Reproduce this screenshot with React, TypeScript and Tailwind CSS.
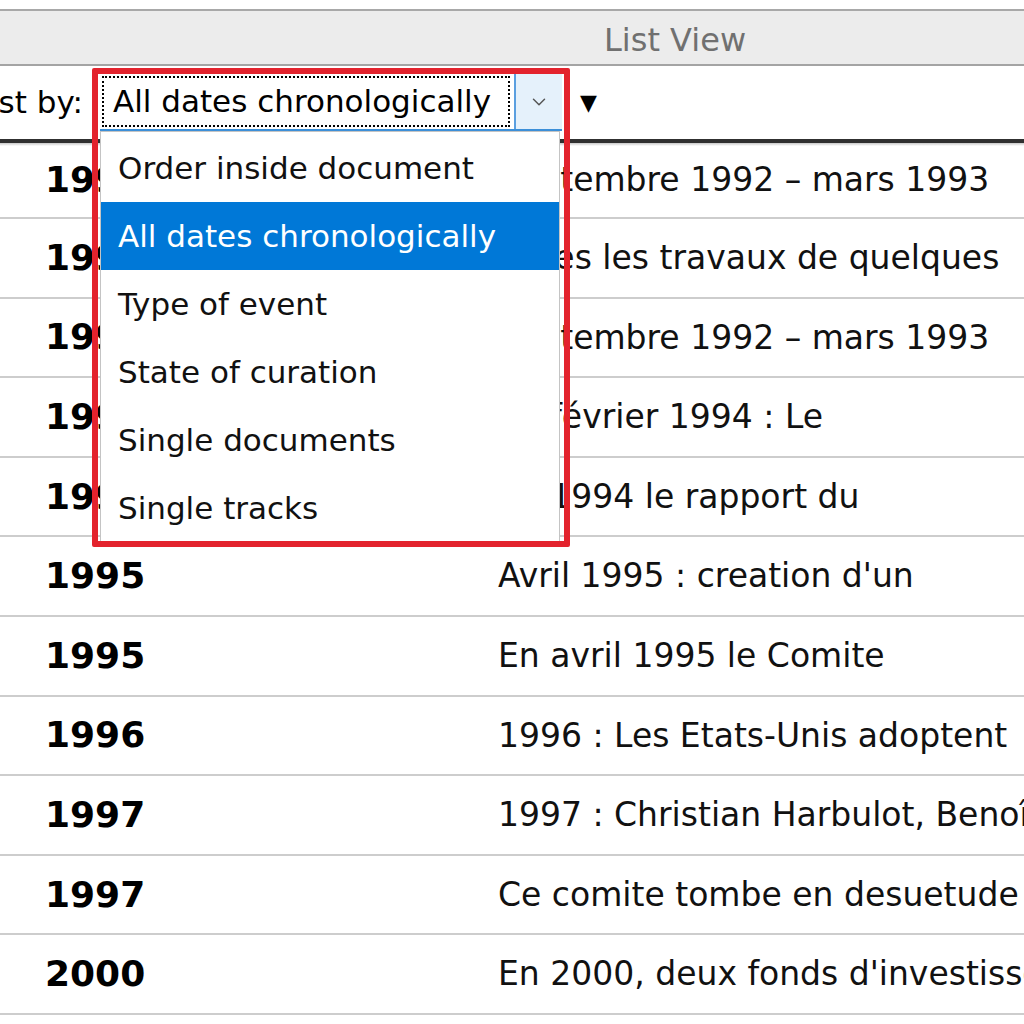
import { ChevronDown } from 'lucide-react';

const rows = [
  { year: '1992', text: 'Septembre 1992 – mars 1993' },
  { year: '1992', text: 'Apres les travaux de quelques' },
  { year: '1993', text: 'Septembre 1992 – mars 1993' },
  { year: '1994', text: 'En février 1994 : Le' },
  { year: '1994', text: 'En 1994 le rapport du' },
  { year: '1995', text: "Avril 1995 : creation d'un" },
  { year: '1995', text: 'En avril 1995 le Comite' },
  { year: '1996', text: '1996 : Les Etats-Unis adoptent' },
  { year: '1997', text: '1997 : Christian Harbulot, Benoît' },
  { year: '1997', text: 'Ce comite tombe en desuetude' },
  { year: '2000', text: "En 2000, deux fonds d'investissement" },
];

const options = [
  'Order inside document',
  'All dates chronologically',
  'Type of event',
  'State of curation',
  'Single documents',
  'Single tracks',
];

export default function App() {
  return (
    <div className="relative w-[1024px] h-[1024px] overflow-hidden bg-white text-black font-['DejaVu_Sans',sans-serif]">
      {/* window top edge */}
      <div className="h-[9px] bg-white" />

      {/* List View header */}
      <div className="h-[57px] bg-[#ececec] border-t-2 border-b-2 border-t-[#a8a8a8] border-b-[#a4a4a4] flex items-center pl-[604px] pt-[4px]">
        <span className="text-[32px] text-[#707070] whitespace-nowrap leading-none">List View</span>
      </div>

      {/* Toolbar */}
      <div className="h-[73px] flex items-start pt-[8px] whitespace-nowrap">
        <span className="ml-[-92px] w-[187px] text-[31px] leading-[57px] shrink-0">Sort list by:</span>
        <div className="ml-[5px] w-[462px] h-[57px] flex items-stretch bg-white border-b-2 border-[#3c8fd8] shrink-0">
          <div className="flex-1 m-[2px] mr-[4px] border-2 border-dotted border-black flex items-center pl-[9px]">
            <span className="text-[31px] leading-none">All dates chronologically</span>
          </div>
          <div className="w-[48px] bg-[#e5f1fb] border-l-2 border-[#5a9fe0] flex items-center justify-center">
            <ChevronDown className="w-[22px] h-[22px] text-[#555]" strokeWidth={1.6} />
          </div>
        </div>
        <span className="ml-[18px] text-[22px] leading-[57px]">▼</span>
      </div>

      {/* dark separator */}
      <div className="h-[4px] bg-[#303030]" />
      <div className="h-[3px] -mb-[3px] bg-gradient-to-b from-[#c8c8c8] to-white relative" />

      {/* Rows */}
      <div>
        {rows.map((r, i) => (
          <div
            key={i}
            className={`${i === 0 ? 'h-[76px]' : 'h-[79.6px]'} flex items-center border-b-2 border-[#cdcdcd] whitespace-nowrap`}
          >
            <div className="w-[498px] pl-[45px] text-[36px] font-bold shrink-0">{r.year}</div>
            <div className="text-[33px] text-[#111]">{r.text}</div>
          </div>
        ))}
      </div>

      {/* Open dropdown list */}
      <div className="absolute left-[100px] top-[131px] w-[460px] h-[412px] bg-white border border-[#c4c4c4] pt-[2px]">
        {options.map((o) => {
          const sel = o === 'All dates chronologically';
          return (
            <div
              key={o}
              className={`h-[68px] flex items-center pl-[17px] text-[31px] whitespace-nowrap ${sel ? 'bg-[#0078d7] text-white' : 'text-[#111]'}`}
            >
              {o}
            </div>
          );
        })}
      </div>

      {/* Red highlight annotation */}
      <div className="absolute left-[92px] top-[68px] w-[478px] h-[479px] border-[6px] border-[#e3232d] rounded-[2px] pointer-events-none" />
    </div>
  );
}
